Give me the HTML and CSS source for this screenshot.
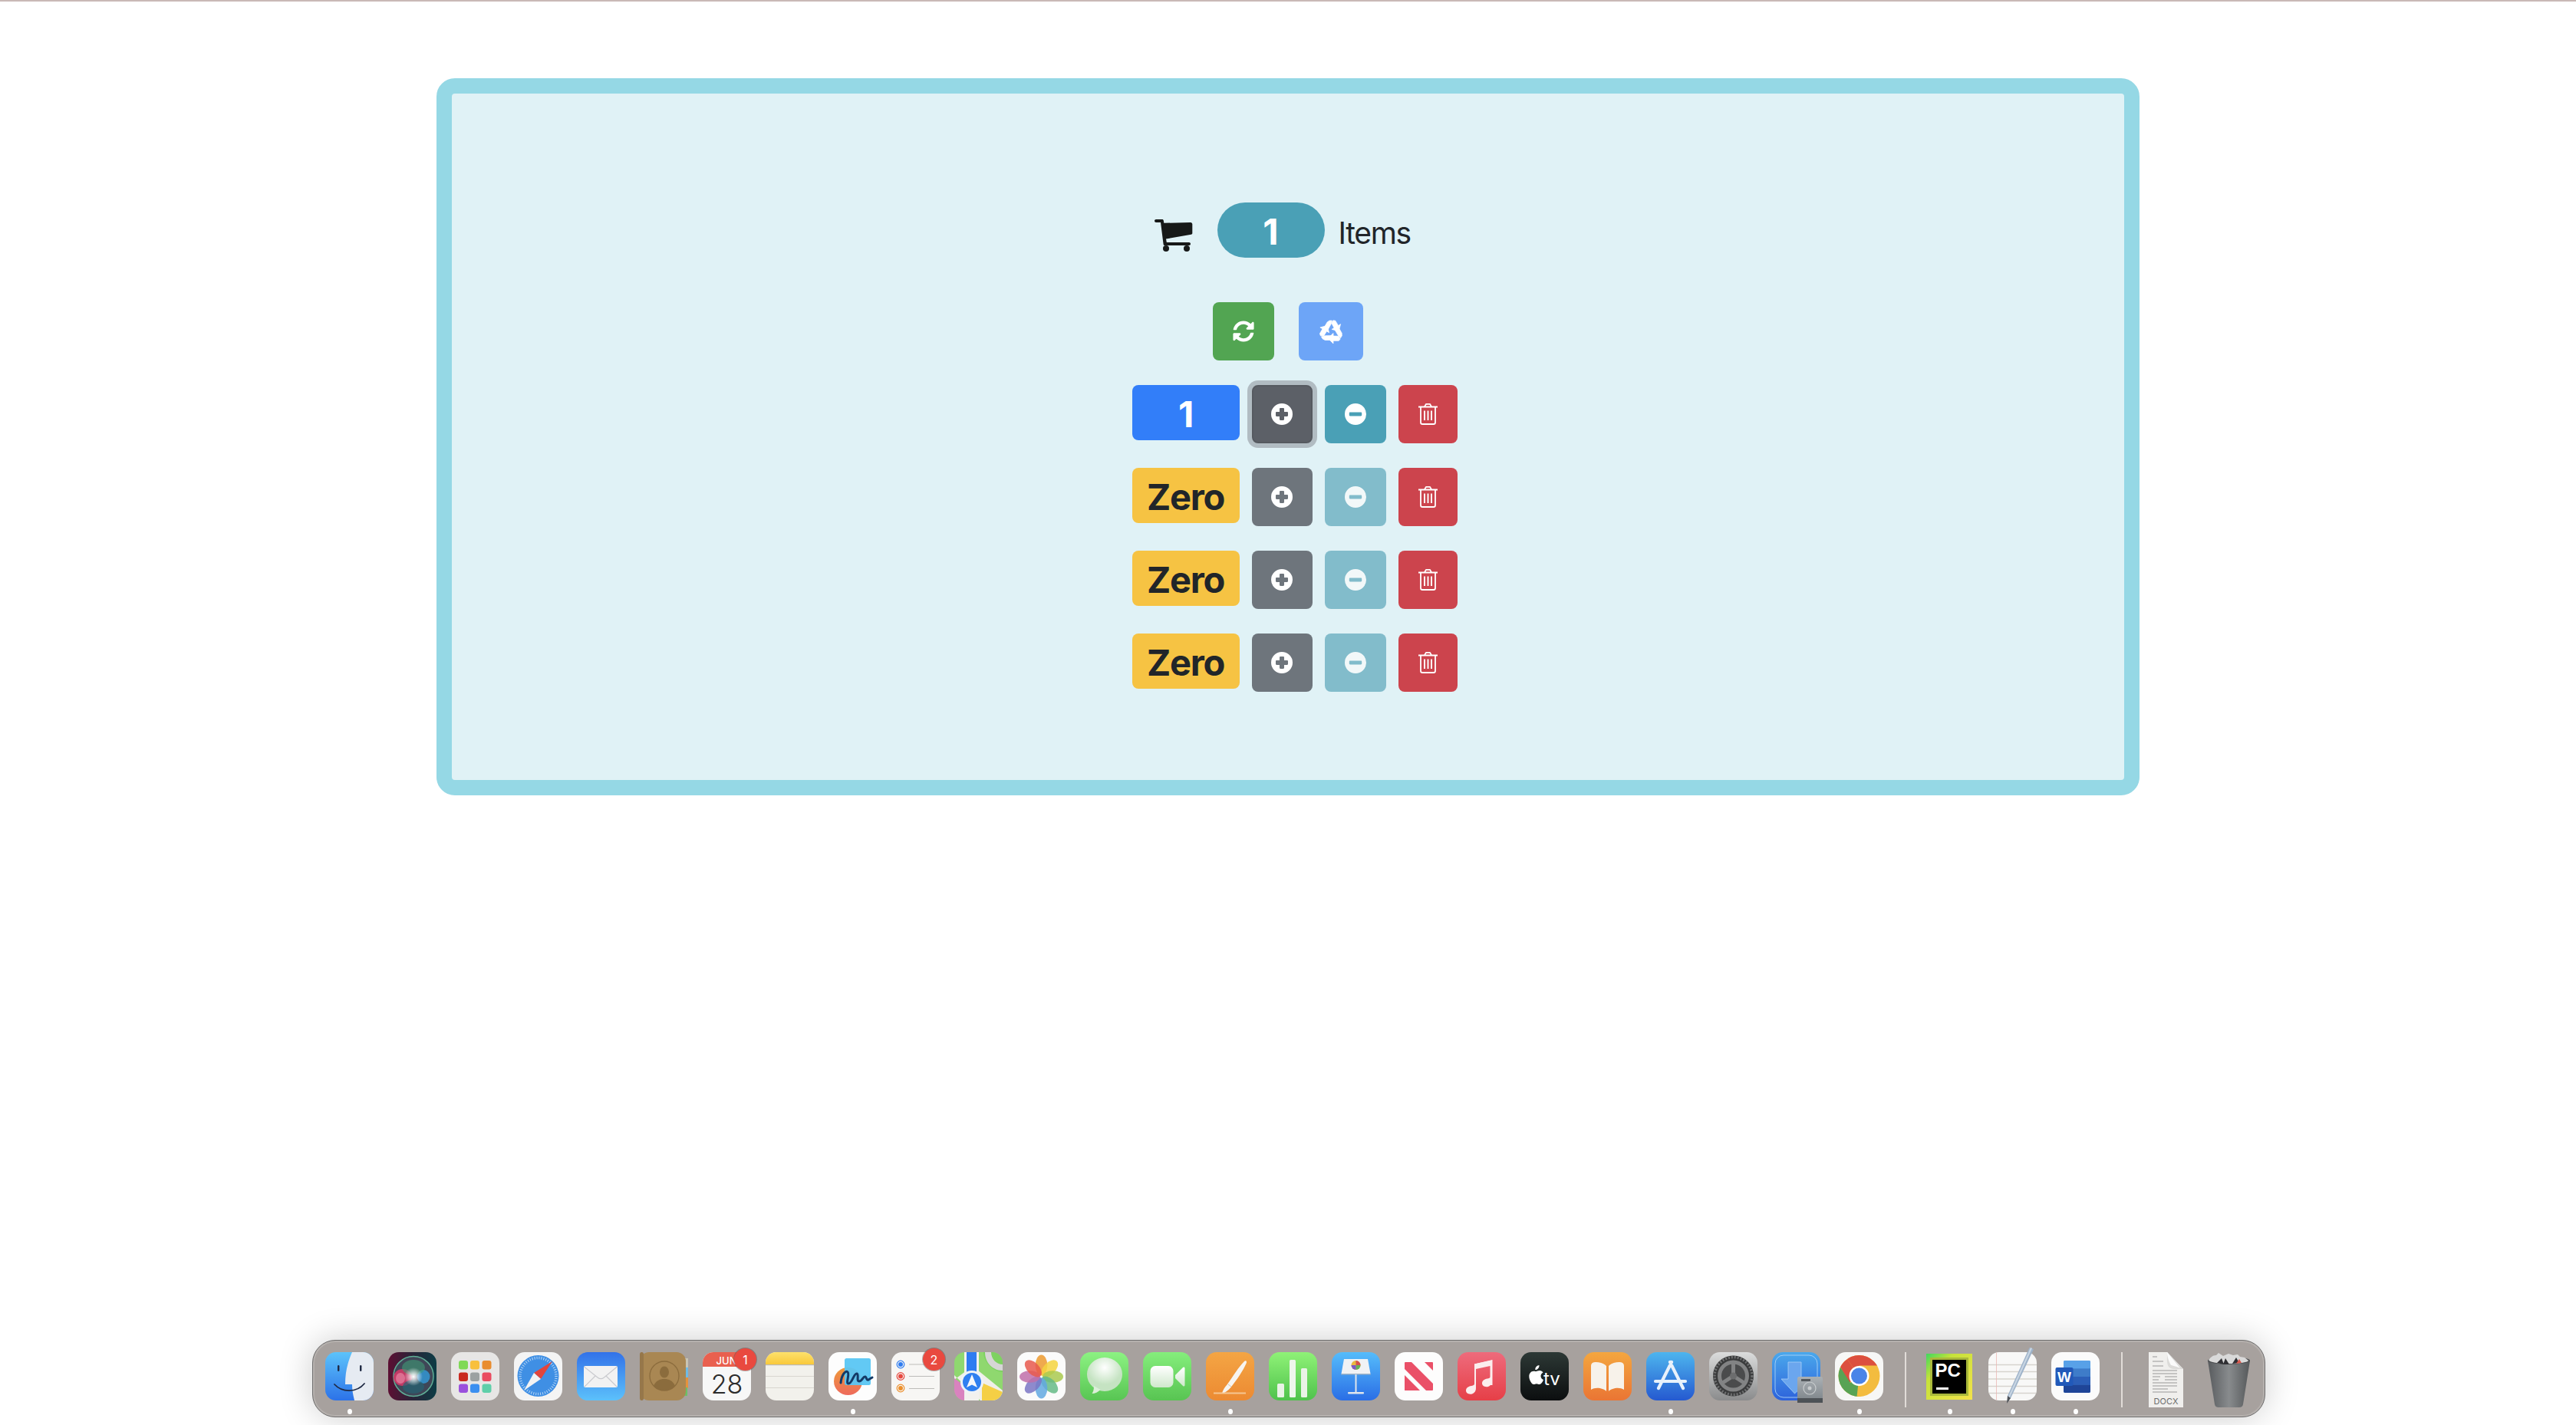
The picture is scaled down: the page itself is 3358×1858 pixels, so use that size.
FILE: index.html
```html
<!DOCTYPE html>
<html lang="en">
<head>
<meta charset="utf-8">
<title>Cart</title>
<link rel="stylesheet" href="styles.css">
</head>
<body>
<div class="page">
  <main class="panel">
    <div class="summary">
      <svg class="cart" viewBox="0 0 50 42"><path d="M2 0h8c1 0 1.600.6 1.800 1.500L12.300 4.800 47 4c1.300 0 2.300 1 2.300 2.300V18c0 1-.7 1.700-1.600 1.800L15 25.500l.8 4.500H45c1 0 2 .9 2 2s-1 2-2 2H13.500c-1 0-1.700-.7-1.900-1.600L8 4H2C.9 4 0 3.100 0 2S.9 0 2 0z"/><path d="M11 5h36v13.500L14.500 25z"/><circle cx="15" cy="38" r="4"/><circle cx="42" cy="38" r="4"/></svg>
      <span class="pill">1</span>
      <span class="items">Items</span>
    </div>
    <div class="actions">
      <button class="btn btn-refresh"><svg class="ico-sync" viewBox="0 0 512 512"><path fill="#fff" d="M370.720 133.280C339.458 104.008 298.888 87.962 255.848 88c-77.458.068-144.328 53.178-162.791 126.850-1.344 5.363-6.122 9.150-11.651 9.150H24.103c-7.498 0-13.194-6.807-11.807-14.176C33.933 94.924 134.813 8 256 8c66.448 0 126.791 26.136 171.315 68.685L463.030 40.970C478.149 25.851 504 36.559 504 57.941V192c0 13.255-10.745 24-24 24H345.941c-21.382 0-32.090-25.851-16.971-40.971l41.750-41.749zM32 296h134.059c21.382 0 32.090 25.851 16.971 40.971l-41.750 41.750c31.262 29.273 71.835 45.319 114.876 45.280 77.418-.07 144.315-53.144 162.787-126.849 1.344-5.363 6.122-9.150 11.651-9.150h57.304c7.498 0 13.194 6.807 11.807 14.176C478.067 417.076 377.187 504 256 504c-66.448 0-126.791-26.136-171.315-68.685L48.970 471.030C33.851 486.149 8 475.441 8 454.059V320c0-13.255 10.745-24 24-24z"/></svg></button>
      <button class="btn btn-recycle"><svg class="ico-recycle" viewBox="-16 -16 32 32"><g fill="#fff" stroke="#fff" stroke-width=".7" stroke-linejoin="round"><g id="rc"><path d="M-11-3.500-5.500-13-2.500-15 1-15-.5-10-5.500-1z"/><path d="M2.500-15.300 5.500-14.800 9.300-8.300 12.500-10.200 10-.7.500-3.200 3.700-5.200.2-11.500z"/></g><use href="#rc" transform="rotate(120)"/><use href="#rc" transform="rotate(240)"/></g></svg></button>
    </div>
    <div class="line">
      <span class="count count-on">1</span>
      <button class="btn btn-plus btn-focus"><svg class="glyph" viewBox="0 0 28 28"><path fill="#fff" fill-rule="evenodd" d="M14 0a14 14 0 1 0 0 28a14 14 0 1 0 0-28zM12.200 6h3.600c.7 0 1.200.5 1.200 1.200V11h3.800c.7 0 1.200.5 1.200 1.200v3.600c0 .7-.5 1.200-1.200 1.200H17v3.800c0 .7-.5 1.200-1.200 1.200h-3.600c-.7 0-1.200-.5-1.200-1.200V17H7.200c-.7 0-1.200-.5-1.200-1.200v-3.600c0-.7.5-1.200 1.200-1.200H11V7.200c0-.7.500-1.200 1.200-1.200z"/></svg></button>
      <button class="btn btn-minus"><svg class="glyph" viewBox="0 0 28 28"><path fill="#fff" fill-rule="evenodd" d="M14 0a14 14 0 1 0 0 28a14 14 0 1 0 0-28zM7 11.500h14c.7 0 1.200.5 1.200 1.200v2.600c0 .7-.5 1.200-1.200 1.200H7c-.7 0-1.200-.5-1.200-1.200v-2.600c0-.7.5-1.200 1.200-1.200z"/></svg></button>
      <button class="btn btn-trash"><svg class="glyph-trash" viewBox="0 0 25 28"><g fill="none" stroke="#fff" stroke-width="1.800"><path d="M0 4.500h25" stroke-width="2" stroke-linecap="round"/><path d="M8 4.500 9.300 1.800c.2-.5.700-.9 1.300-.9h3.800c.6 0 1.100.4 1.300.9L17 4.500"/><path d="M3 5v19.700C3 26 4 27 5.300 27h14.400c1.300 0 2.300-1 2.300-2.300V5"/><path d="M8 9.500v12.500M12.500 9.500v12.500M17 9.500v12.500" stroke-width="1.900"/></g></svg></button>
    </div>
    <div class="line">
      <span class="count count-zero">Zero</span>
      <button class="btn btn-plus"><svg class="glyph" viewBox="0 0 28 28"><path fill="#fff" fill-rule="evenodd" d="M14 0a14 14 0 1 0 0 28a14 14 0 1 0 0-28zM12.200 6h3.600c.7 0 1.200.5 1.200 1.200V11h3.800c.7 0 1.200.5 1.200 1.200v3.600c0 .7-.5 1.200-1.200 1.200H17v3.800c0 .7-.5 1.200-1.200 1.200h-3.600c-.7 0-1.200-.5-1.200-1.200V17H7.200c-.7 0-1.200-.5-1.200-1.200v-3.600c0-.7.5-1.200 1.200-1.200H11V7.200c0-.7.500-1.200 1.200-1.200z"/></svg></button>
      <button class="btn btn-minus btn-off"><svg class="glyph" viewBox="0 0 28 28"><path fill="#fff" fill-rule="evenodd" d="M14 0a14 14 0 1 0 0 28a14 14 0 1 0 0-28zM7 11.500h14c.7 0 1.200.5 1.200 1.200v2.600c0 .7-.5 1.200-1.200 1.200H7c-.7 0-1.200-.5-1.200-1.200v-2.600c0-.7.5-1.200 1.200-1.200z"/></svg></button>
      <button class="btn btn-trash"><svg class="glyph-trash" viewBox="0 0 25 28"><g fill="none" stroke="#fff" stroke-width="1.800"><path d="M0 4.500h25" stroke-width="2" stroke-linecap="round"/><path d="M8 4.500 9.300 1.800c.2-.5.700-.9 1.300-.9h3.800c.6 0 1.100.4 1.300.9L17 4.500"/><path d="M3 5v19.700C3 26 4 27 5.300 27h14.400c1.300 0 2.300-1 2.300-2.300V5"/><path d="M8 9.500v12.500M12.500 9.500v12.500M17 9.500v12.500" stroke-width="1.900"/></g></svg></button>
    </div>
    <div class="line">
      <span class="count count-zero">Zero</span>
      <button class="btn btn-plus"><svg class="glyph" viewBox="0 0 28 28"><path fill="#fff" fill-rule="evenodd" d="M14 0a14 14 0 1 0 0 28a14 14 0 1 0 0-28zM12.200 6h3.600c.7 0 1.200.5 1.200 1.200V11h3.800c.7 0 1.200.5 1.200 1.200v3.600c0 .7-.5 1.200-1.200 1.200H17v3.800c0 .7-.5 1.200-1.200 1.200h-3.600c-.7 0-1.200-.5-1.200-1.200V17H7.200c-.7 0-1.200-.5-1.200-1.200v-3.600c0-.7.5-1.200 1.200-1.200H11V7.200c0-.7.500-1.200 1.200-1.200z"/></svg></button>
      <button class="btn btn-minus btn-off"><svg class="glyph" viewBox="0 0 28 28"><path fill="#fff" fill-rule="evenodd" d="M14 0a14 14 0 1 0 0 28a14 14 0 1 0 0-28zM7 11.500h14c.7 0 1.200.5 1.200 1.200v2.600c0 .7-.5 1.200-1.200 1.200H7c-.7 0-1.200-.5-1.200-1.200v-2.600c0-.7.5-1.200 1.200-1.200z"/></svg></button>
      <button class="btn btn-trash"><svg class="glyph-trash" viewBox="0 0 25 28"><g fill="none" stroke="#fff" stroke-width="1.800"><path d="M0 4.500h25" stroke-width="2" stroke-linecap="round"/><path d="M8 4.500 9.300 1.800c.2-.5.700-.9 1.300-.9h3.800c.6 0 1.100.4 1.300.9L17 4.500"/><path d="M3 5v19.700C3 26 4 27 5.300 27h14.400c1.300 0 2.300-1 2.300-2.300V5"/><path d="M8 9.500v12.500M12.500 9.500v12.500M17 9.500v12.500" stroke-width="1.900"/></g></svg></button>
    </div>
    <div class="line">
      <span class="count count-zero">Zero</span>
      <button class="btn btn-plus"><svg class="glyph" viewBox="0 0 28 28"><path fill="#fff" fill-rule="evenodd" d="M14 0a14 14 0 1 0 0 28a14 14 0 1 0 0-28zM12.200 6h3.600c.7 0 1.200.5 1.200 1.200V11h3.800c.7 0 1.200.5 1.200 1.200v3.600c0 .7-.5 1.200-1.200 1.200H17v3.800c0 .7-.5 1.200-1.200 1.200h-3.600c-.7 0-1.200-.5-1.200-1.200V17H7.200c-.7 0-1.200-.5-1.200-1.200v-3.600c0-.7.5-1.200 1.200-1.200H11V7.200c0-.7.500-1.200 1.200-1.200z"/></svg></button>
      <button class="btn btn-minus btn-off"><svg class="glyph" viewBox="0 0 28 28"><path fill="#fff" fill-rule="evenodd" d="M14 0a14 14 0 1 0 0 28a14 14 0 1 0 0-28zM7 11.500h14c.7 0 1.200.5 1.200 1.200v2.600c0 .7-.5 1.200-1.200 1.200H7c-.7 0-1.200-.5-1.200-1.200v-2.600c0-.7.5-1.200 1.200-1.200z"/></svg></button>
      <button class="btn btn-trash"><svg class="glyph-trash" viewBox="0 0 25 28"><g fill="none" stroke="#fff" stroke-width="1.800"><path d="M0 4.500h25" stroke-width="2" stroke-linecap="round"/><path d="M8 4.500 9.300 1.800c.2-.5.700-.9 1.300-.9h3.800c.6 0 1.100.4 1.300.9L17 4.500"/><path d="M3 5v19.700C3 26 4 27 5.300 27h14.400c1.300 0 2.300-1 2.300-2.300V5"/><path d="M8 9.500v12.500M12.500 9.500v12.500M17 9.500v12.500" stroke-width="1.900"/></g></svg></button>
    </div>
  </main>

  <footer class="dock">
    <!-- Finder -->
    <div class="slot on"><svg class="app" viewBox="0 0 63 63"><defs><linearGradient id="f1" x1="0" y1="0" x2="0" y2="1"><stop offset="0" stop-color="#5cc3fb"/><stop offset="1" stop-color="#2c72e8"/></linearGradient></defs><rect width="63" height="63" rx="14" fill="url(#f1)"/><path d="M35 0h14a14 14 0 0 1 14 14v35a14 14 0 0 1-14 14H38c-2-8-3-14-3-21h-9c0-16 3-28 9-42z" fill="#e6ebf2"/><rect x="16" y="17" width="2.400" height="8" rx="1.200" fill="#1f2a44"/><rect x="45" y="17" width="2.400" height="8" rx="1.200" fill="#1f2a44"/><path d="M12 42c10 11 29 11 39-1" fill="none" stroke="#1f2a44" stroke-width="1.800" stroke-linecap="round"/></svg></div>
    <!-- Siri -->
    <div class="slot"><svg class="app" viewBox="0 0 63 63"><defs><linearGradient id="s1" x1="0" y1="0" x2="1" y2="0"><stop offset="0" stop-color="#5c0f33"/><stop offset=".5" stop-color="#2a2438"/><stop offset="1" stop-color="#0c3c45"/></linearGradient><radialGradient id="s2"><stop offset="0" stop-color="#fff"/><stop offset=".3" stop-color="#fff" stop-opacity=".75"/><stop offset="1" stop-color="#fff" stop-opacity="0"/></radialGradient></defs><rect width="63" height="63" rx="14" fill="url(#s1)"/><circle cx="33" cy="31.500" r="26" fill="#3f4657" stroke="#5fae96" stroke-width="1.500"/><ellipse cx="19" cy="33" rx="12" ry="11" fill="#d93a68" opacity=".85"/><ellipse cx="16" cy="34" rx="6" ry="7" fill="#f39ab5" opacity=".55"/><ellipse cx="46" cy="32" rx="8.500" ry="9" fill="#3296d2" opacity=".85"/><ellipse cx="33" cy="20" rx="15" ry="10" fill="#3f9a74" opacity=".6"/><ellipse cx="33" cy="45" rx="14" ry="9" fill="#256272" opacity=".7"/><circle cx="33" cy="32" r="12" fill="url(#s2)"/></svg></div>
    <!-- Launchpad -->
    <div class="slot"><svg class="app" viewBox="0 0 63 63"><rect width="63" height="63" rx="14" fill="#e7e6e5"/><rect x="10" y="11" width="12" height="11.500" rx="3" fill="#7fd956"/><rect x="25" y="11" width="12" height="11.500" rx="3" fill="#f8c03d"/><rect x="40.500" y="11" width="12" height="11.500" rx="3" fill="#e98c2f"/><rect x="10" y="26.500" width="12" height="11.500" rx="3" fill="#c9291f"/><rect x="25" y="26.500" width="12" height="11.500" rx="3" fill="#9ca1a1"/><rect x="40.500" y="26.500" width="12" height="11.500" rx="3" fill="#ea4b60"/><rect x="10" y="41.500" width="12" height="11.500" rx="3" fill="#9a50dc"/><rect x="25" y="41.500" width="12" height="11.500" rx="3" fill="#3b8ff0"/><rect x="40.500" y="41.500" width="12" height="11.500" rx="3" fill="#5fcfa9"/></svg></div>
    <!-- Safari -->
    <div class="slot"><svg class="app" viewBox="0 0 63 63"><rect width="63" height="63" rx="14" fill="#f4f4f4"/><circle cx="31.500" cy="31" r="27" fill="#3f8fe4"/><circle cx="31.500" cy="31" r="23.500" fill="none" stroke="#b6d6f6" stroke-width="3.500" stroke-dasharray="1 2"/><path d="M50 12 26 27l9 8z" fill="#e2453c"/><path d="M13 50 26 27l9 8z" fill="#f3f3f3"/></svg></div>
    <!-- Mail -->
    <div class="slot"><svg class="app" viewBox="0 0 63 63"><defs><linearGradient id="m1" x1="0" y1="0" x2="0" y2="1"><stop offset="0" stop-color="#3272e9"/><stop offset="1" stop-color="#5cc1fb"/></linearGradient></defs><rect width="63" height="63" rx="14" fill="url(#m1)"/><rect x="9" y="18" width="44" height="28" rx="2" fill="#f2f2f2"/><path d="M9.500 19 27 33c2.500 2 6 2 8.500 0L52.500 19M10 45 24 31M52 45 38 31" fill="none" stroke="#c9cace" stroke-width="1.200"/></svg></div>
    <!-- Contacts -->
    <div class="slot"><svg class="app" viewBox="0 0 63 63"><rect x="50" y="8" width="13" height="14" fill="#c9c4b4"/><rect x="50" y="20" width="13" height="14" fill="#6ebbe6"/><rect x="50" y="33" width="13" height="14" fill="#e5923c"/><rect x="50" y="46" width="12" height="11" fill="#6cc065"/><rect width="60" height="63" rx="12" fill="#a98753"/><rect x="0" width="5" height="63" rx="3" fill="#96774a"/><circle cx="32" cy="31" r="19" fill="none" stroke="#8b6c3d" stroke-width="1.300"/><ellipse cx="32" cy="26" rx="6" ry="7.500" fill="#8b6c3d"/><path d="M18 44c3-7 8-9 14-9s11 2 14 9c-7 8-21 8-28 0z" fill="#8b6c3d"/></svg></div>
    <!-- Calendar -->
    <div class="slot"><svg class="app" viewBox="0 0 63 63"><defs><clipPath id="c1"><rect width="63" height="63" rx="14"/></clipPath></defs><g clip-path="url(#c1)"><rect width="63" height="63" fill="#f7f7f7"/><rect width="63" height="19" fill="#e9604f"/></g><text class="t-jun" x="31" y="15.500" text-anchor="middle">JUN</text><text class="t-28" x="31.500" y="54" text-anchor="middle">28</text></svg><span class="notif">1</span></div>
    <!-- Notes -->
    <div class="slot"><svg class="app" viewBox="0 0 63 63"><defs><clipPath id="n1"><rect width="63" height="63" rx="14"/></clipPath><linearGradient id="n2" x1="0" y1="0" x2="0" y2="1"><stop offset="0" stop-color="#fde16b"/><stop offset="1" stop-color="#f9c93b"/></linearGradient></defs><g clip-path="url(#n1)"><rect width="63" height="63" fill="#f2f1ec"/><rect width="63" height="16" fill="url(#n2)"/><rect y="16" width="63" height="1.200" fill="#bdb9b0"/><rect y="31" width="63" height="1" fill="#d8d6cf"/><rect y="46" width="63" height="1" fill="#d8d6cf"/></g></svg></div>
    <!-- Freeform -->
    <div class="slot on"><svg class="app" viewBox="0 0 63 63"><defs><linearGradient id="ff" x1="0" y1="0" x2="0" y2="1"><stop offset="0" stop-color="#ee9a3a"/><stop offset="1" stop-color="#ee6a5c"/></linearGradient></defs><rect width="63" height="63" rx="14" fill="#fdfdfd"/><ellipse cx="25.500" cy="38" rx="18.500" ry="18" fill="url(#ff)"/><rect x="21" y="8" width="34" height="35" rx="2.500" fill="#5ac6f3" opacity=".95"/><path d="M16 40C17 30 22 23 25 26C28 29 22 41 26 41C31 41 33 27 37 28C40 29 36 38 40 38C44 38 45 31 48 32C50 33 49 37 52 36L57 33" fill="none" stroke="#143a66" stroke-width="3" stroke-linecap="round" stroke-linejoin="round"/></svg></div>
    <!-- Reminders -->
    <div class="slot"><svg class="app" viewBox="0 0 63 63"><rect width="63" height="63" rx="14" fill="#f7f6f4"/><circle cx="12" cy="16" r="4.800" fill="none" stroke="#2f7cf0" stroke-width="1.200"/><circle cx="12" cy="16" r="3" fill="#2f7cf0"/><circle cx="12" cy="31.500" r="4.800" fill="none" stroke="#e6483f" stroke-width="1.200"/><circle cx="12" cy="31.500" r="3" fill="#e6483f"/><circle cx="12" cy="47" r="4.800" fill="none" stroke="#ec8f2c" stroke-width="1.200"/><circle cx="12" cy="47" r="3" fill="#ec8f2c"/><path d="M23 16h33M23 31.500h33M23 47.500h33" stroke="#bdbcb9" stroke-width="1"/></svg><span class="notif">2</span></div>
    <!-- Maps -->
    <div class="slot"><svg class="app" viewBox="0 0 63 63"><defs><clipPath id="mp"><rect width="63" height="63" rx="14"/></clipPath></defs><g clip-path="url(#mp)"><rect width="63" height="63" fill="#8fd86f"/><path d="M0 36 24 18 63 50V63H34L0 30z" fill="#f0efe9"/><path d="M0 34 22 50V63H0z" fill="#d982bf"/><path d="M36 63V40l27 12v11z" fill="#f5cf45"/><path d="M63 0v26C52 26 38 14 38 0z" fill="#7ed261"/><path d="M40 0c0 14 10 24 23 24v-8c-8 0-15-7-15-16z" fill="#d6d6d6"/><path d="M16 0h13v30H16z" fill="#2e7cf0"/><path d="M13 0h3v63h-3zM29 0h3v30h-3z" fill="#f2f1ee"/><path d="M13 40h19v23H13z" fill="#f2f1ee"/><circle cx="23" cy="39" r="15" fill="#eef2f6"/><circle cx="23" cy="39" r="12" fill="#2f7ff0"/><path d="M23 29l7 17-7-3.500-7 3.500z" fill="#f5f7fb"/></g></svg></div>
    <!-- Photos -->
    <div class="slot"><svg class="app" viewBox="0 0 63 63"><rect width="63" height="63" rx="14" fill="#fbfbfb"/><g transform="translate(31.500 32)"><ellipse cy="-15" rx="7.800" ry="13.500" fill="#ec9a2f" opacity=".85"/><ellipse cy="-15" rx="7.800" ry="13.500" fill="#f5d33f" opacity=".85" transform="rotate(45)"/><ellipse cy="-15" rx="7.800" ry="13.500" fill="#a9c94f" opacity=".85" transform="rotate(90)"/><ellipse cy="-15" rx="7.800" ry="13.500" fill="#65ba86" opacity=".85" transform="rotate(135)"/><ellipse cy="-15" rx="7.800" ry="13.500" fill="#62a8e0" opacity=".85" transform="rotate(180)"/><ellipse cy="-15" rx="7.800" ry="13.500" fill="#7a76c4" opacity=".85" transform="rotate(225)"/><ellipse cy="-15" rx="7.800" ry="13.500" fill="#bf6fa9" opacity=".85" transform="rotate(270)"/><ellipse cy="-15" rx="7.800" ry="13.500" fill="#e8594e" opacity=".85" transform="rotate(315)"/></g></svg></div>
    <!-- Messages -->
    <div class="slot"><svg class="app" viewBox="0 0 63 63"><defs><linearGradient id="ms" x1="0" y1="0" x2="0" y2="1"><stop offset="0" stop-color="#8cf282"/><stop offset="1" stop-color="#58c553"/></linearGradient><radialGradient id="ms2" cy=".3"><stop offset="0" stop-color="#fff"/><stop offset="1" stop-color="#c5e3c2"/></radialGradient></defs><rect width="63" height="63" rx="14" fill="url(#ms)"/><ellipse cx="32" cy="29" rx="23" ry="22" fill="url(#ms2)"/><path d="M18 44c0 5-1 8-2.500 10 4 0 8-2 11-5z" fill="#dcefd9"/></svg></div>
    <!-- FaceTime -->
    <div class="slot"><svg class="app" viewBox="0 0 63 63"><defs><linearGradient id="ft" x1="0" y1="0" x2="0" y2="1"><stop offset="0" stop-color="#85ee7c"/><stop offset="1" stop-color="#58c452"/></linearGradient><linearGradient id="ft2" x1="0" y1="0" x2="0" y2="1"><stop offset="0" stop-color="#fff"/><stop offset="1" stop-color="#cfe8cc"/></linearGradient></defs><rect width="63" height="63" rx="14" fill="url(#ft)"/><rect x="9.500" y="18" width="30" height="28" rx="6.500" fill="url(#ft2)"/><path d="M42 30 52 20c1-1 2.500-.5 2.500 1v22c0 1.500-1.500 2-2.500 1L42 34z" fill="url(#ft2)"/></svg></div>
    <!-- Pages -->
    <div class="slot on"><svg class="app" viewBox="0 0 63 63"><defs><linearGradient id="pg" x1="0" y1="0" x2="0" y2="1"><stop offset="0" stop-color="#f4a544"/><stop offset="1" stop-color="#ec8a32"/></linearGradient></defs><rect width="63" height="63" rx="14" fill="url(#pg)"/><path d="M50 12c1.500-1.500 3.500-.5 3 1.500-3 8-12 22-21 33-3 3.500-7 6-10 7.500l-1-.5c1-3.500 3.500-8 6.500-11C35 32 42 20 50 12z" fill="#f7f4ef"/><path d="M10 53.500h42" stroke="#f6c692" stroke-width="1.800"/><path d="M29 42 33 45" stroke="#c9c4bb" stroke-width="1"/></svg></div>
    <!-- Numbers -->
    <div class="slot"><svg class="app" viewBox="0 0 63 63"><defs><linearGradient id="nb" x1="0" y1="0" x2="0" y2="1"><stop offset="0" stop-color="#8ff277"/><stop offset="1" stop-color="#4fc24c"/></linearGradient></defs><rect width="63" height="63" rx="14" fill="url(#nb)"/><rect x="11" y="41" width="9" height="18" rx="1.500" fill="#e9f3e6"/><rect x="27" y="10" width="8" height="49" rx="1.500" fill="#eef6ec"/><rect x="42" y="21" width="8" height="38" rx="1.500" fill="#e9f3e6"/></svg></div>
    <!-- Keynote -->
    <div class="slot"><svg class="app" viewBox="0 0 63 63"><defs><linearGradient id="kn" x1="0" y1="0" x2="0" y2="1"><stop offset="0" stop-color="#55bcfb"/><stop offset="1" stop-color="#2a6ee6"/></linearGradient></defs><rect width="63" height="63" rx="14" fill="url(#kn)"/><path d="M16 9h31l3.500 19h-38z" fill="#f0f2f5"/><path d="M12.500 28h38l.5 1.500H12z" fill="#9eb2c6"/><circle cx="31.500" cy="17" r="6" fill="#e9b93f"/><path d="M31.500 11a6 6 0 0 1 6 6h-6z" fill="#d8504e"/><path d="M31.500 17h6a6 6 0 0 1-6 6z" fill="#63b35b"/><path d="M31.500 17v6a6 6 0 0 1-6-6z" fill="#7d5ac3"/><rect x="30.500" y="29" width="2" height="24" fill="#dfe5ec"/><rect x="21" y="52" width="21" height="2.400" rx="1" fill="#dfe5ec"/></svg></div>
    <!-- News -->
    <div class="slot"><svg class="app" viewBox="0 0 63 63"><defs><clipPath id="nw"><rect x="13" y="13" width="37" height="37" rx="1"/></clipPath></defs><rect width="63" height="63" rx="14" fill="#fdfdfd"/><g clip-path="url(#nw)"><rect x="13" y="13" width="37" height="37" fill="#ea5068"/><path d="M13 22 42 51H26L10 34zM22 13h17l12 12v17z" fill="#fdfdfd"/><path d="M13 30 34 51H13z" fill="#ea5068"/></g></svg></div>
    <!-- Music -->
    <div class="slot"><svg class="app" viewBox="0 0 63 63"><defs><linearGradient id="mu" x1="0" y1="0" x2="0" y2="1"><stop offset="0" stop-color="#ee6b7c"/><stop offset="1" stop-color="#e63f47"/></linearGradient></defs><rect width="63" height="63" rx="14" fill="url(#mu)"/><path d="M22 15.500 45 10.500v6L24 21v26c0 4.500-3 7.800-7.500 7.800-3.300 0-5.500-2.100-5.500-4.700 0-3.100 2.800-5.300 7-6 1.500-.3 4-.7 4-2.500zM45 16v21.500c0 4.500-3 7.800-7.500 7.800-3.300 0-5.500-2.100-5.500-4.700 0-3.100 2.800-5.300 7-6 1.500-.3 4-.7 4-2.500V16z" fill="#fbeeee"/><path d="M22 15.500 45.500 10v33h-3V18L24 22v25h-2z" fill="#fbeeee"/></svg></div>
    <!-- TV -->
    <div class="slot"><svg class="app" viewBox="0 0 63 63"><defs><linearGradient id="tv" x1="0" y1="0" x2="0" y2="1"><stop offset="0" stop-color="#2c3835"/><stop offset="1" stop-color="#0c0e0f"/></linearGradient></defs><rect width="63" height="63" rx="14" fill="url(#tv)"/><path d="M20 25c2 0 3-1 5-1 2 0 3.500 1 4.500 2.500-2 1.200-3 2.700-3 4.800 0 2.300 1.400 3.900 3.500 4.700-.5 1.500-1.300 3-2.200 4.100-1 1.200-1.900 2-3.100 2-1.300 0-2-.8-3.700-.8s-2.500.8-3.700.8c-1.500 0-2.600-1.200-3.700-3-1.500-2.300-2.300-5-2.300-7.500 0-4 2.700-6.800 6-6.800 1.300 0 2.400.7 3.700.7zM24.500 17c.1 2-.7 3.500-1.700 4.500-1 1-2.300 1.700-3.500 1.600-.2-1.800.7-3.400 1.600-4.300 1-1 2.400-1.700 3.600-1.800z" fill="#fff"/><text class="t-tv" x="30" y="43">tv</text></svg></div>
    <!-- Books -->
    <div class="slot"><svg class="app" viewBox="0 0 63 63"><defs><linearGradient id="bk" x1="0" y1="0" x2="0" y2="1"><stop offset="0" stop-color="#f4a63f"/><stop offset="1" stop-color="#ea7534"/></linearGradient></defs><rect width="63" height="63" rx="14" fill="url(#bk)"/><path d="M10 18c0-3 2-5 6-5 6 0 11 2 14 5v33c-4-4-14-6-20-2zM53 18c0-3-2-5-6-5-6 0-11 2-14 5v33c4-4 14-6 20-2z" fill="#f7f2ea"/></svg></div>
    <!-- App Store -->
    <div class="slot on"><svg class="app" viewBox="0 0 63 63"><defs><linearGradient id="as" x1="0" y1="0" x2="0" y2="1"><stop offset="0" stop-color="#4db5ee"/><stop offset="1" stop-color="#2559d0"/></linearGradient></defs><rect width="63" height="63" rx="14" fill="url(#as)"/><path d="M33 13 16 47M31 13 48 47M12 38h39" fill="none" stroke="#e8f1fb" stroke-width="4.200" stroke-linecap="round"/></svg></div>
    <!-- System Preferences -->
    <div class="slot"><svg class="app" viewBox="0 0 63 63"><defs><linearGradient id="sp" x1="0" y1="0" x2="0" y2="1"><stop offset="0" stop-color="#dbdcdc"/><stop offset="1" stop-color="#8a8b8c"/></linearGradient></defs><rect width="63" height="63" rx="14" fill="url(#sp)"/><circle cx="31.500" cy="31" r="26.500" fill="#3a3b3c"/><circle cx="31.500" cy="31" r="24.500" fill="none" stroke="#6f7071" stroke-width="3.500" stroke-dasharray="2 2"/><circle cx="31.500" cy="31" r="18" fill="#4a4b4c" stroke="#828384" stroke-width="5"/><path d="M31.500 31V13M31.500 31 16 41M31.500 31 47 41" stroke="#828384" stroke-width="5"/><circle cx="31.500" cy="31" r="4.500" fill="#6c6d6e"/></svg></div>
    <!-- Migration Assistant -->
    <div class="slot"><svg class="app" viewBox="0 0 63 63"><defs><linearGradient id="mg" x1="0" y1="0" x2="0" y2="1"><stop offset="0" stop-color="#4aa8ec"/><stop offset="1" stop-color="#2d62db"/></linearGradient><linearGradient id="mg2" x1="0" y1="0" x2="0" y2="1"><stop offset="0" stop-color="#aab0b4"/><stop offset="1" stop-color="#7b8287"/></linearGradient></defs><rect width="63" height="63" rx="14" fill="url(#mg)"/><rect x="4" y="4" width="55" height="55" rx="11" fill="none" stroke="#a9d2f6" stroke-width=".9"/><path d="M21 13h17v22h11L29.500 54 12 35h9z" fill="#6ba6ee" stroke="#a9d2f6" stroke-width=".8"/><rect x="33" y="32" width="33" height="34" rx="2.500" fill="url(#mg2)"/><rect x="33" y="60" width="33" height="6" fill="#4d5256"/><circle cx="49" cy="47" r="8" fill="none" stroke="#c8ccce" stroke-width="1.200"/><circle cx="49" cy="47" r="2.500" fill="#c8ccce"/><rect x="38" y="35" width="12" height="3" fill="#53585c"/></svg></div>
    <!-- Chrome -->
    <div class="slot on"><svg class="app" viewBox="0 0 63 63"><defs><clipPath id="cr"><circle cx="31.500" cy="31" r="27"/></clipPath></defs><rect width="63" height="63" rx="14" fill="#f7f7f6"/><g clip-path="url(#cr)"><rect width="63" height="63" fill="#f3bc3f"/><path d="M31.500 31 8 -2H62V17.500H31.500z" fill="#dc4f3f"/><path d="M31.500 31 8 -2H-2V30L6.200 17.500 18 40z" fill="#dc4f3f"/><path d="M-3 18 6 18 20 40 31.500 31 31 60 31 63H-3z" fill="#58a354"/><path d="M31.500 31 45 40 31 63 28 63z" fill="#f3bc3f"/></g><circle cx="31.500" cy="31" r="13" fill="#fff"/><circle cx="31.500" cy="31" r="10.500" fill="#4a84e8"/></svg></div>
    <span class="sep"></span>
    <!-- PyCharm -->
    <div class="slot on"><svg class="app" viewBox="0 0 63 63"><defs><linearGradient id="pc" x1="0" y1="0" x2="1" y2="1"><stop offset="0" stop-color="#3fd95e"/><stop offset=".3" stop-color="#c6e23a"/><stop offset="1" stop-color="#f3e24a"/></linearGradient></defs><rect x="1" y="2" width="60" height="60" fill="url(#pc)"/><rect x="6" y="7" width="50" height="50" fill="#a9b83a"/><rect x="9" y="10" width="44" height="44" fill="#000"/><text class="t-pc" x="12.500" y="32">PC</text><rect x="14" y="46" width="16" height="3" fill="#fff"/></svg></div>
    <!-- TextEdit -->
    <div class="slot on"><svg class="app app-over" viewBox="0 0 63 63"><defs><clipPath id="te"><rect width="63" height="63" rx="14"/></clipPath></defs><g clip-path="url(#te)"><rect width="63" height="63" fill="#f8f8f7"/><path d="M0 16.500h63M0 25.500h63M0 35h63M0 44.500h63M0 53.500h63" stroke="#d6d3ce" stroke-width="1.300"/><path d="M10.500 0v63" stroke="#eab8b4" stroke-width=".8"/></g><path d="M53.500 -6 59 -4 29 60 25 62 25 57z" fill="#9db2c9"/><path d="M55 -6 57 -5 27.500 60 26 58z" fill="#c8d5e2"/><path d="M25 57 29 60 24 67z" fill="#4e5258"/></svg></div>
    <!-- Word -->
    <div class="slot on"><svg class="app" viewBox="0 0 63 63"><rect width="63" height="63" rx="14" fill="#fbfbfb"/><rect x="16" y="11" width="35" height="42" rx="2" fill="#4a8fdf"/><rect x="16" y="11" width="35" height="10.500" rx="2" fill="#58a1e8"/><rect x="16" y="21.500" width="35" height="10.500" fill="#3e7cc9"/><rect x="16" y="32" width="35" height="10.500" fill="#2c5fb8"/><path d="M16 42.500h35V51a2 2 0 0 1-2 2H18a2 2 0 0 1-2-2z" fill="#1f4598"/><rect x="5.500" y="20" width="23" height="24" rx="2" fill="#2159b9"/><text class="t-w" x="17" y="38.500" text-anchor="middle">W</text></svg></div>
    <span class="sep"></span>
    <!-- DOCX file -->
    <div class="slot"><svg class="app app-over" viewBox="0 6 63 74"><g transform="translate(0 6)"><path d="M9 0h24l21 22v50H9z" fill="#f0efed"/><path d="M33 0c0 10-1 16 3 20 3 3 10 2 18 2z" fill="#dcdbd9"/><path d="M33 0c0 9 5 17 5 17s8 2 12 4z" fill="#fbfbfb"/><g stroke="#8e8e8e" stroke-width=".9"><path d="M14 6h6M14 12h14M14 18h14M14 24h32M14 28h32M14 32h10M30 32h16M14 36h8M30 36h16M14 40h32M14 44h32M14 48h20M14 52h32"/></g><text class="t-docx" x="31.500" y="68" text-anchor="middle">DOCX</text></g></svg></div>
    <!-- Trash -->
    <div class="slot"><svg class="app app-over" viewBox="0 6 63 74"><defs><linearGradient id="tr" x1="0" y1="0" x2="1" y2="0"><stop offset="0" stop-color="#585b5e"/><stop offset=".5" stop-color="#888b8d"/><stop offset="1" stop-color="#55585a"/></linearGradient></defs><g transform="translate(0 6)"><path d="M4 11 13 68c.5 3 3 4 5 4h27c3 0 4.500-1.500 5-4l9-57z" fill="url(#tr)"/><ellipse cx="31.500" cy="11" rx="27.500" ry="5" fill="#4c4e50"/><path d="M5 10c3-3 5-6 10-6l3-3 6 4 7-3 6 2 6-1 3 3 6 1 5 4c-2 5-50 6-52-1z" fill="#d9d9d9"/><path d="M16 14l6-6 3 8zM36 15l5-8 4 7zM27 8l5 8-8 0z" fill="#2f2f33"/><path d="M41 15l4-6 3 5z" fill="#d8584d"/></g></svg></div>
  </footer>
</div>
</body>
</html>
```
FILE: styles.css
```css
* { box-sizing: border-box; }
html, body { margin: 0; padding: 0; }
body {
  background: #fff;
  color: #212529;
  font-family: Inter, "Liberation Sans", sans-serif;
}
.page {
  height: 100vh;
  overflow: hidden;
  border-top: 2px solid #c9b9b6;
  padding-top: 100px;
  display: flex;
  flex-direction: column;
  align-items: center;
}
.panel {
  width: 2220px;
  height: 935px;
  background: #e0f2f6;
  border: 20px solid #95d8e5;
  border-radius: 24px;
  padding-top: 142px;
  display: flex;
  flex-direction: column;
}
.summary {
  display: flex;
  justify-content: center;
  align-items: center;
  height: 72px;
  padding-right: 16px;
  margin-bottom: 58px;
}
.cart { width: 50px; height: 42px; fill: #171918; margin: 14px 32px 0 0; }
.pill {
  width: 140px;
  height: 72px;
  border-radius: 36px;
  background: #4aa0b6;
  color: #fff;
  font-size: 47px;
  font-weight: 700;
  padding-top: 3px;
  display: flex;
  align-items: center;
  justify-content: center;
  margin-right: 18px;
}
.items { width: 93px; font-size: 39px; letter-spacing: -1.3px; line-height: 48px; margin-top: 7px; white-space: nowrap; }
.actions {
  display: flex;
  justify-content: center;
  gap: 32px;
  margin-bottom: 32px;
}
.line {
  display: flex;
  justify-content: center;
  align-items: flex-start;
  gap: 16px;
  padding-left: 17px;
  margin-bottom: 32px;
}
.btn {
  height: 76px;
  border: 0;
  border-radius: 8px;
  padding: 0;
  display: flex;
  align-items: center;
  justify-content: center;
  font: inherit;
}
.btn-refresh { width: 80px; background: #52a552; }
.btn-recycle { width: 84px; background: #6da5f7; }
.btn-plus { width: 79px; background: #6e757c; }
.btn-focus {
  background: #5c6067;
  border: 2px solid #565a60;
  box-shadow: 0 0 0 6px #b1bcc2;
}
.btn-minus { width: 80px; background: #4aa0b6; }
.btn-off { background: #82bccb; }
.btn-off .glyph { opacity: .9; }
.btn-trash { width: 77px; background: #cc444d; }
.ico-sync { width: 28px; height: 28px; }
.ico-recycle { width: 31px; height: 31px; }
.glyph { width: 28px; height: 28px; }
.glyph-trash { width: 25px; height: 28px; }
.count {
  width: 140px;
  height: 72px;
  border-radius: 8px;
  font-size: 47px;
  font-weight: 700;
  letter-spacing: -1.2px;
  padding-top: 3px;
  display: flex;
  align-items: center;
  justify-content: center;
}
.count-on { background: #327ef9; color: #fff; }
.count-zero { background: #f6c343; color: #212529; }

.dock {
  margin-top: auto;
  margin-bottom: 10px;
  width: 2546px;
  height: 101px;
  align-self: flex-start;
  margin-left: 407px;
  display: flex;
  gap: 19px;
  padding: 15px 0 0 16px;
  background: #a7a19e;
  border: 1px solid #6f6e6e;
  border-radius: 30px;
  box-shadow: inset 0 0 0 2px #b5b0ad, 0 0 45px rgba(0, 0, 0, .2);
}
.slot {
  position: relative;
  width: 63px;
  height: 80px;
  flex: none;
}
.app { display: block; width: 63px; height: 63px; overflow: visible; }
.app-over { height: auto; }
.on::after {
  content: "";
  position: absolute;
  left: 28.500px;
  top: 74px;
  width: 6px;
  height: 7px;
  border-radius: 50%;
  background: #fff;
}
.sep {
  width: 2px;
  height: 72px;
  flex: none;
  background: #e1dcd8;
  margin: 0 6px 0 9px;
}
.notif {
  position: absolute;
  top: -5px;
  left: 41px;
  width: 29px;
  height: 29px;
  border-radius: 50%;
  background: #e9493f;
  box-shadow: 0 0 0 1px rgba(90, 80, 80, .45);
  color: #fff;
  font-size: 16px;
  display: flex;
  align-items: center;
  justify-content: center;
}
.t-jun { font: 500 13px Inter, sans-serif; fill: #fff; }
.t-28 { font: 300 34px Inter, sans-serif; fill: #2c2c2c; }
.t-tv { font: 400 24px Inter, sans-serif; fill: #fff; }
.t-pc { font: 700 24px "Liberation Sans", sans-serif; fill: #fff; }
.t-w { font: 600 19px "Liberation Sans", sans-serif; fill: #fff; }
.t-docx { font: 400 11px Inter, sans-serif; fill: #6c6c6c; }
```
